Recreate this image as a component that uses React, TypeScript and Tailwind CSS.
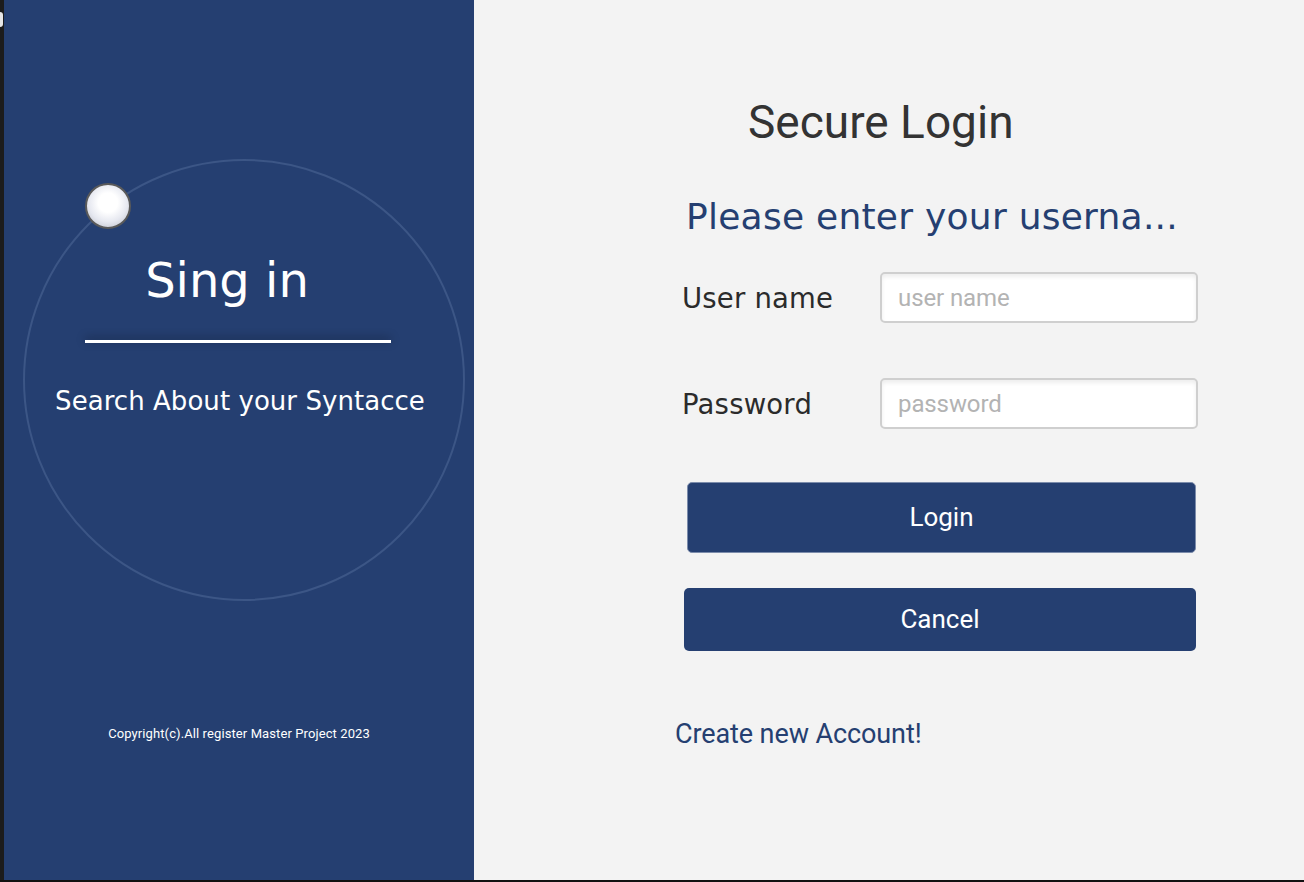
import { useState } from "react";

const dejavu = "font-['DejaVu_Sans',Verdana,sans-serif]";
const roboto = "font-['Roboto','Inter',sans-serif]";

function Field({
  label,
  placeholder,
  type,
  value,
  onChange,
}: {
  label: string;
  placeholder: string;
  type: string;
  value: string;
  onChange: (v: string) => void;
}) {
  return (
    <div className="flex items-center ml-[6px]">
      <label className={`${dejavu} w-[198px] text-[27.5px] leading-[34px] tracking-[0.2px] text-[#2b2b2b]`}>
        {label}
      </label>
      <input
        type={type}
        value={value}
        placeholder={placeholder}
        onChange={(e) => onChange(e.target.value)}
        className={`${roboto} w-[318px] h-[51px] rounded-[5px] border-2 border-[#cfcfcf] bg-white pl-[16px] text-[24px] tracking-[-0.1px] text-[#333] placeholder:text-[#b3b3b3] shadow-[inset_0_3px_4px_rgba(0,0,0,0.07)] outline-none`}
      />
    </div>
  );
}

export default function App() {
  const [user, setUser] = useState("");
  const [pass, setPass] = useState("");

  return (
    <div className="w-[1304px] h-[882px] bg-[#111] flex flex-col overflow-hidden">
      <div className="flex h-[880px]">
        <div className="w-[4px] bg-[#1c1c1c] flex flex-col">
          <div className="mt-[12px] h-[15px] w-[3px] rounded-r-[3px] bg-[#e6e6e6]" />
        </div>

        <aside className="relative w-[470px] bg-[#253f71] flex flex-col items-center pt-[252px]">
          {/* decorative ring + knob */}
          <div className="absolute left-[19px] top-[159px] w-[442px] h-[442px] rounded-full border-2 border-[#3c5686]" />
          <div className="absolute left-[81px] top-[183px] w-[46px] h-[46px] rounded-full border-2 border-[#5a5a5a] bg-[radial-gradient(circle_at_50%_42%,#ffffff_30%,#e6e8f0_60%,#b4b7c2_100%)]" />

          <h2 className={`${dejavu} relative -ml-[24px] text-[48px] leading-[56px] text-white`}>
            Sing in
          </h2>
          <div className="relative mt-[32px] ml-[-2px] w-[306px] h-[3px] bg-white shadow-[0_-2px_10px_rgba(0,0,0,0.45)]" />
          <p className={`${dejavu} relative mt-[42px] ml-[2px] text-[26px] leading-[32px] tracking-[0.05px] text-white`}>
            Search About your Syntacce
          </p>
          <p className={`${roboto} relative mt-[309px] text-[13px] leading-[16px] tracking-[0.1px] text-white`}>
            Copyright(c).All register Master Project 2023
          </p>
        </aside>

        <main className="flex-1 bg-[#f3f3f3] flex flex-col items-start pl-[202px] pt-[94px]">
          <h1 className={`${roboto} ml-[72px] text-[46px] leading-[56px] text-[#333]`}>
            Secure Login
          </h1>
          <p className={`${dejavu} ml-[10px] mt-[45px] text-[36px] leading-[44px] tracking-[0.25px] text-[#253f71]`}>
            Please enter your userna...
          </p>

          <div className="mt-[33px]">
            <Field label="User name" placeholder="user name" type="text" value={user} onChange={setUser} />
          </div>
          <div className="mt-[55px]">
            <Field label="Password" placeholder="password" type="password" value={pass} onChange={setPass} />
          </div>

          <button
            type="button"
            className={`${roboto} ml-[11px] mt-[53px] w-[509px] h-[71px] rounded-[5px] bg-[#253f71] border border-[#7c8cab] text-[26px] text-white`}
          >
            Login
          </button>
          <button
            type="button"
            className={`${roboto} ml-[8px] mt-[35px] w-[512px] h-[63px] rounded-[5px] bg-[#253f71] text-[26px] text-white`}
          >
            Cancel
          </button>

          <a href="#" className={`${roboto} ml-[-1px] mt-[67px] text-[27px] leading-[32px] tracking-[-0.1px] text-[#253f71]`}>
            Create new Account!
          </a>
        </main>
      </div>
    </div>
  );
}
